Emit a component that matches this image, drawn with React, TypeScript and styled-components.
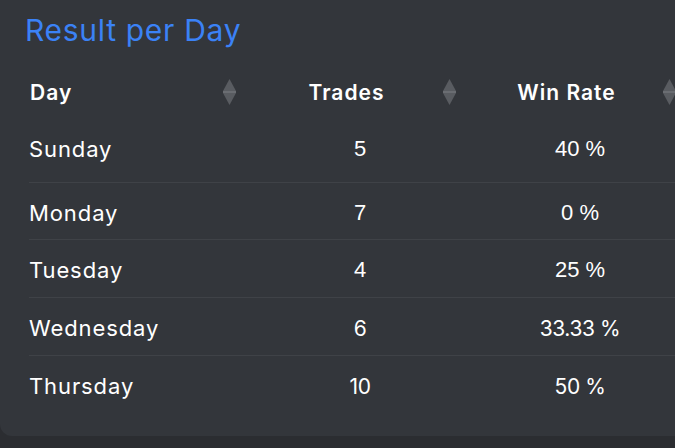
import React from 'react'
import styled, { createGlobalStyle } from 'styled-components'

const GlobalStyle = createGlobalStyle`
    html, body {
        margin: 0;
        padding: 0;
        background: #2b2d31;
        overflow: hidden;
    }
    body {
        width: 675px;
        height: 448px;
    }
`

interface DayResult {
    day: string
    trades: number
    winRate: string
    legacyDigits?: boolean
}

const results: DayResult[] = [
    { day: 'Sunday', trades: 5, winRate: '40 %', legacyDigits: true },
    { day: 'Monday', trades: 7, winRate: '0 %', legacyDigits: true },
    { day: 'Tuesday', trades: 4, winRate: '25 %', legacyDigits: true },
    { day: 'Wednesday', trades: 6, winRate: '33.33 %' },
    { day: 'Thursday', trades: 10, winRate: '50 %' },
]

const rowHeights = [66, 57, 58, 58, 58]

// card is wider than the viewport in the screenshot, so clip it at the right
const StyledCard = styled.section`
    width: 675px;
    overflow: hidden;
    margin-top: -12px;
    padding: 24px 0 23px;
    box-sizing: border-box;
    background: #33363b;
    border-radius: 12px 0 0 12px;
    font-family: Inter, 'Noto Sans', sans-serif;
    color: #ffffff;
`

const StyledTitle = styled.h2`
    margin: 0 0 20px 25px;
    font-size: 30px;
    line-height: 36px;
    font-weight: 400;
    color: #3b82f6;
    letter-spacing: 0.7px;
`

const StyledTable = styled.div`
    margin-left: 29px;
    display: flex;
    flex-direction: column;
`

const StyledRow = styled.div<{ $height: number; $divider?: boolean }>`
    display: grid;
    grid-template-columns: 221px 220px 220px;
    align-items: center;
    height: ${({ $height }) => $height}px;
    box-sizing: border-box;
    border-top: ${({ $divider }) => ($divider ? '1px solid #3f4247' : 'none')};
    padding-top: ${({ $divider }) => ($divider ? '3px' : '0')};
`

const StyledHeadCell = styled.div<{ $align: 'left' | 'center' }>`
    display: flex;
    align-items: center;
    padding-right: 14px;

    .label {
        flex: 1;
        text-align: ${({ $align }) => $align};
        font-size: 21px;
        font-weight: 600;
        letter-spacing: 1px;
        padding-left: ${({ $align }) => ($align === 'left' ? '1px' : '0')};
    }
`

const StyledCell = styled.div<{ $legacy?: boolean }>`
    text-align: center;
    font-size: ${({ $legacy }) => ($legacy ? '22px' : '21px')};
    font-family: ${({ $legacy }) =>
        $legacy ? "'Liberation Sans', Arial, sans-serif" : 'inherit'};
    letter-spacing: ${({ $legacy }) => ($legacy ? '0' : '-0.4px')};
    white-space: nowrap;
`

const StyledDayCell = styled.div`
    font-size: 22px;
    letter-spacing: 0.9px;
    white-space: nowrap;
`

const SortIcon: React.FC = () => (
    <svg width="13" height="26" viewBox="0 0 13 26" aria-hidden="true">
        <polygon points="6.5,0 13,12 0,12" fill="#595c61" />
        <polygon points="0,14 13,14 6.5,26" fill="#595c61" />
        <rect x="0" y="12" width="13" height="2" fill="#6a6d72" />
    </svg>
)

const HeadCell: React.FC<{ label: string; align: 'left' | 'center' }> = ({
    label,
    align,
}) => (
    <StyledHeadCell $align={align}>
        <span className="label">{label}</span>
        <SortIcon />
    </StyledHeadCell>
)

const App: React.FC = () => {
    return (
        <>
            <GlobalStyle />
            <StyledCard>
                <StyledTitle>Result per Day</StyledTitle>
                <StyledTable>
                    <StyledRow $height={48}>
                        <HeadCell label="Day" align="left" />
                        <HeadCell label="Trades" align="center" />
                        <HeadCell label="Win Rate" align="center" />
                    </StyledRow>
                    {results.map((result, index) => (
                        <StyledRow
                            key={result.day}
                            $height={rowHeights[index]}
                            $divider={index > 0}
                        >
                            <StyledDayCell>{result.day}</StyledDayCell>
                            <StyledCell $legacy={result.legacyDigits}>
                                {result.trades}
                            </StyledCell>
                            <StyledCell $legacy={result.legacyDigits}>
                                {result.winRate}
                            </StyledCell>
                        </StyledRow>
                    ))}
                </StyledTable>
            </StyledCard>
        </>
    )
}

export default App
